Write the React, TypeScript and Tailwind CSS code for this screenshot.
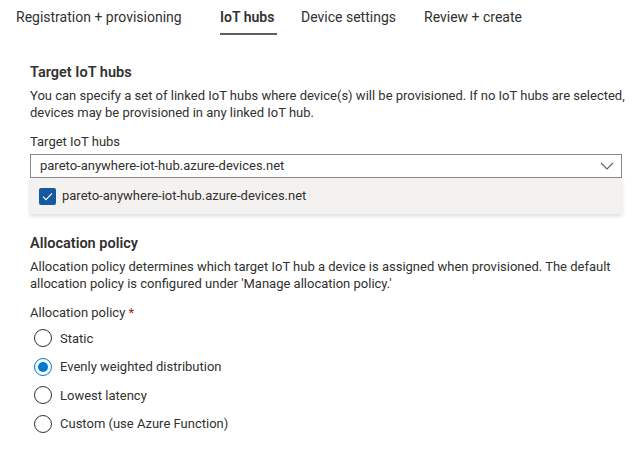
import { useState } from "react";

const tabs = [
  { label: "Registration + provisioning", width: "w-[204px]" },
  { label: "IoT hubs", width: "w-[81px]" },
  { label: "Device settings", width: "w-[123px]" },
  { label: "Review + create", width: "w-[120px]" },
];

const policies = [
  "Static",
  "Evenly weighted distribution",
  "Lowest latency",
  "Custom (use Azure Function)",
];

const HUB = "pareto-anywhere-iot-hub.azure-devices.net";

function Radio({ checked }: { checked: boolean }) {
  return (
    <span
      className={`flex h-[18px] w-[18px] shrink-0 items-center justify-center rounded-full border ${
        checked ? "border-[#0078d4]" : "border-[#323130]"
      }`}
    >
      {checked && <span className="h-[10px] w-[10px] rounded-full bg-[#0078d4]" />}
    </span>
  );
}

export default function App() {
  const [activeTab, setActiveTab] = useState(1);
  const [policy, setPolicy] = useState(1);
  const [hubChecked, setHubChecked] = useState(true);

  return (
    <div className="h-[450px] w-[640px] overflow-hidden bg-white font-['Roboto',sans-serif] text-[#323130]">
      <div className="flex h-[35px] pl-[16px]">
        {tabs.map((tab, i) => (
          <button
            key={tab.label}
            onClick={() => setActiveTab(i)}
            className={`${tab.width} flex shrink-0 flex-col items-start text-left`}
          >
            <span
              className={`pt-[7px] text-[14px] leading-[20px] ${
                i === activeTab ? "font-semibold" : ""
              }`}
            >
              {tab.label}
            </span>
            {i === activeTab && (
              <span className="mt-[6px] h-[2px] w-[57px] bg-[#605e5c]" />
            )}
          </button>
        ))}
      </div>

      <div className="pl-[30px] pr-[18px]">
        <h2 className="mt-[28px] text-[14.5px] font-semibold leading-[20px]">
          Target IoT hubs
        </h2>
        <p className="mr-[-14px] mt-[4px] text-[13px] leading-[17px]">
          You can specify a set of linked IoT hubs where device(s) will be
          provisioned. If no IoT hubs are selected, devices may be provisioned
          in any linked IoT hub.
        </p>

        <div className="mt-[12px] text-[13px] leading-[18px]">Target IoT hubs</div>
        <div className="mt-[3px] flex h-[24px] items-center justify-between border border-[#8a8886] pl-[9px] pr-[7px] text-[13px]">
          <span>{hubChecked ? HUB : ""}</span>
          <svg width="14" height="8" viewBox="0 0 14 8" fill="none">
            <path d="M1 1l6 6 6-6" stroke="#605e5c" strokeWidth="1.1" />
          </svg>
        </div>
        <div className="flex h-[36px] items-center bg-[#f3f2f1] pl-[9px] shadow-[0_2px_4px_rgba(0,0,0,0.14)]">
          <button
            onClick={() => setHubChecked(!hubChecked)}
            className={`flex h-[17px] w-[17px] items-center justify-center rounded-[2px] ${
              hubChecked ? "bg-[#17599f]" : "border border-[#323130] bg-white"
            }`}
          >
            {hubChecked && (
              <svg width="11" height="9" viewBox="0 0 11 9" fill="none">
                <path d="M1 4.6l3 3L10 1.4" stroke="white" strokeWidth="1.1" />
              </svg>
            )}
          </button>
          <span className="ml-[6px] text-[13px]">{HUB}</span>
        </div>

        <h2 className="mt-[20px] text-[14.5px] font-semibold leading-[20px]">
          Allocation policy
        </h2>
        <p className="mt-[4px] text-[13px] leading-[17px]">
          Allocation policy determines which target IoT hub a device is assigned
          when provisioned. The default allocation policy is configured under
          'Manage allocation policy.'
        </p>

        <div className="mt-[12px] text-[13px] leading-[17px]">
          Allocation policy <span className="text-[#a4262c]">*</span>
        </div>
        <div className="mt-[3px] flex flex-col">
          {policies.map((p, i) => (
            <button
              key={p}
              onClick={() => setPolicy(i)}
              className="flex h-[28.5px] items-center gap-[8px] pl-[4px] text-left text-[13px]"
            >
              <Radio checked={policy === i} />
              <span>{p}</span>
            </button>
          ))}
        </div>
      </div>
    </div>
  );
}
